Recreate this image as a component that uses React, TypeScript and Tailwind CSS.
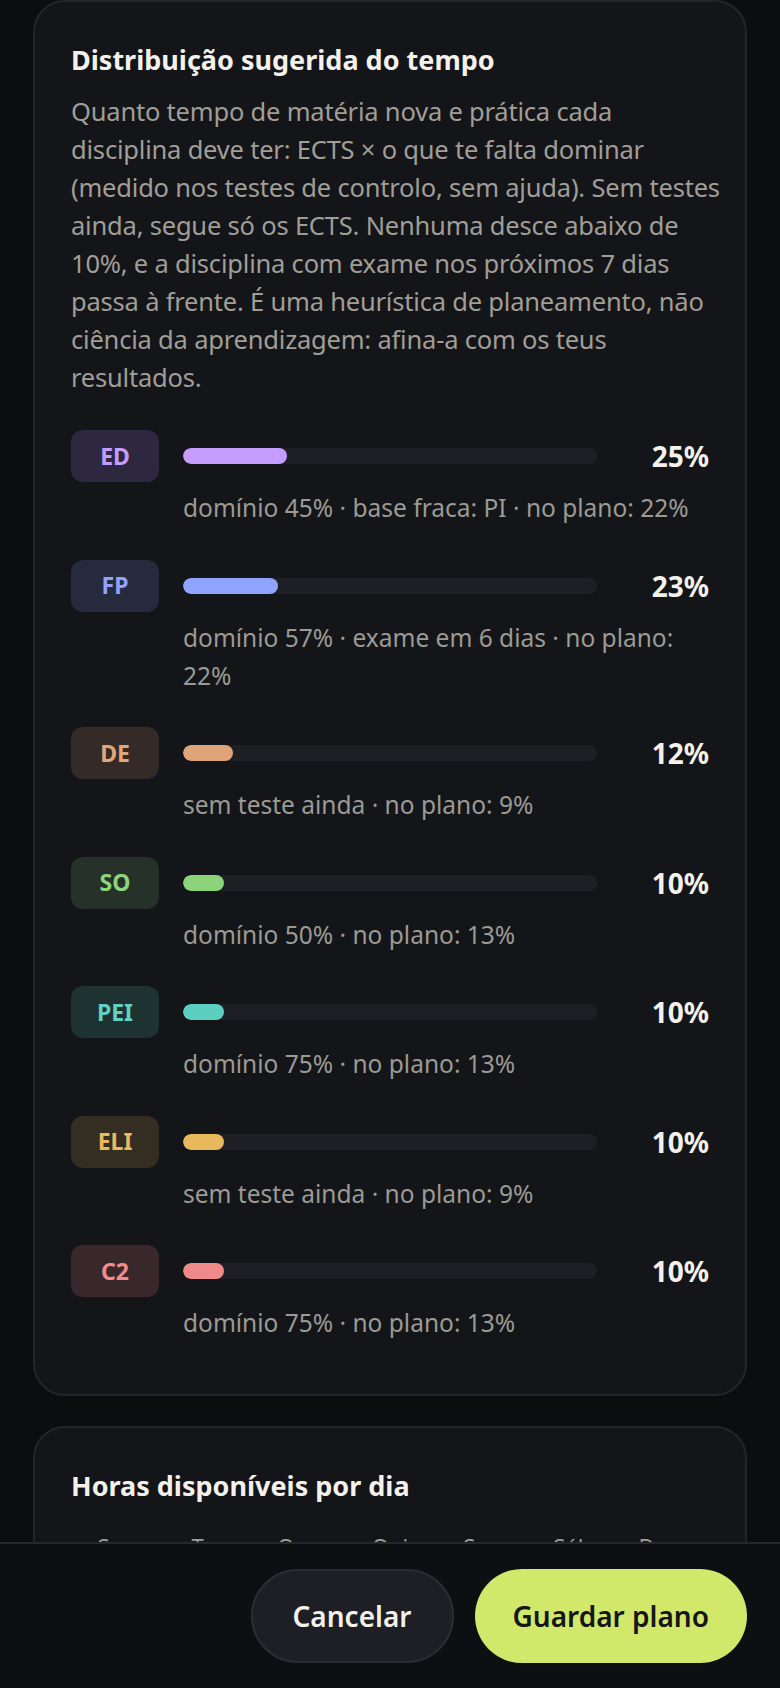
import React from 'react'

type Subject = {
  code: string
  pct: number
  note: string
  badge: string
  bar: string
}

const subjects: Subject[] = [
  { code: 'ED', pct: 25, note: 'domínio 45% · base fraca: PI · no plano: 22%', badge: 'bg-[#2d2840] text-[#c39dff]', bar: 'bg-[#c49dff]' },
  { code: 'FP', pct: 23, note: 'domínio 57% · exame em 6 dias · no plano: 22%', badge: 'bg-[#272a3d] text-[#8fa3ff]', bar: 'bg-[#8ea4ff]' },
  { code: 'DE', pct: 12, note: 'sem teste ainda · no plano: 9%', badge: 'bg-[#342a27] text-[#e3a67c]', bar: 'bg-[#e0a47a]' },
  { code: 'SO', pct: 10, note: 'domínio 50% · no plano: 13%', badge: 'bg-[#26312a] text-[#8fd47b]', bar: 'bg-[#8cd479]' },
  { code: 'PEI', pct: 10, note: 'domínio 75% · no plano: 13%', badge: 'bg-[#1f3232] text-[#60d1c2]', bar: 'bg-[#5dcfc0]' },
  { code: 'ELI', pct: 10, note: 'sem teste ainda · no plano: 9%', badge: 'bg-[#342d21] text-[#e9b95c]', bar: 'bg-[#e8b85c]' },
  { code: 'C2', pct: 10, note: 'domínio 75% · no plano: 13%', badge: 'bg-[#39282b] text-[#f28c8c]', bar: 'bg-[#f08a8a]' },
]

// keep the same line breaks as the design
const intro = [
  'Quanto tempo de matéria nova e prática cada',
  'disciplina deve ter: ECTS × o que te falta dominar',
  '(medido nos testes de controlo, sem ajuda). Sem testes',
  'ainda, segue só os ECTS. Nenhuma desce abaixo de',
  '10%, e a disciplina com exame nos próximos 7 dias',
  'passa à frente. É uma heurística de planeamento, não',
  'ciência da aprendizagem: afina-a com os teus',
  'resultados.',
]

const days = ['Seg', 'Ter', 'Qua', 'Qui', 'Sex', 'Sáb', 'Dom']

function SubjectRow({ s }: { s: Subject }) {
  return (
    <div className="flex gap-6">
      <div
        className={`flex h-[52px] w-[88px] shrink-0 items-center justify-center rounded-xl text-[23px] font-bold ${s.badge}`}
      >
        {s.code}
      </div>
      <div className="min-w-0 flex-1">
        <div className="flex h-[52px] items-center gap-6">
          <div className="h-4 flex-1 overflow-hidden rounded-full bg-[#1e1f24]">
            <div className={`h-full rounded-full ${s.bar}`} style={{ width: `${s.pct}%` }} />
          </div>
          <div className="w-[88px] text-right text-[28px] font-bold text-[#f3f1ea]">{s.pct}%</div>
        </div>
        <p className="mt-[7px] text-[24.5px] leading-[38px] text-[#9b9a93]">{s.note}</p>
      </div>
    </div>
  )
}

export default function App() {
  return (
    <div className="min-h-screen bg-[#0c0d0f] px-[33px] pb-[220px] font-['Noto_Sans',sans-serif]">
      <section className="rounded-[32px] border-2 border-[#24252a] bg-[#141519] px-9 pt-10 pb-[52px]">
        <h2 className="text-[27px] font-bold leading-9 text-[#f3f1ea]">Distribuição sugerida do tempo</h2>
        <p className="mt-[14px] text-[25.5px] leading-[38px] tracking-[-0.2px] text-[#a09e97]">
          {intro.map((line) => (
            <span key={line} className="block whitespace-nowrap">
              {line}
            </span>
          ))}
        </p>
        <div className="mt-[34px] flex flex-col gap-[32.5px]">
          {subjects.map((s) => (
            <SubjectRow key={s.code} s={s} />
          ))}
        </div>
      </section>

      <section className="mt-[30px] rounded-[32px] border-2 border-[#24252a] bg-[#141519] px-9 pt-10 pb-10">
        <h2 className="text-[27px] font-bold leading-9 text-[#f3f1ea]">Horas disponíveis por dia</h2>
        <div className="mt-[27px] grid grid-cols-7 text-center text-[22px] leading-[30px] text-[#a09e97]">
          {days.map((d) => (
            <span key={d}>{d}</span>
          ))}
        </div>
        <div className="mt-3 grid grid-cols-7 gap-2">
          {days.map((d) => (
            <div key={d} className="h-16 rounded-xl border-2 border-[#24252a] bg-[#1b1c21]" />
          ))}
        </div>
      </section>

      <div className="fixed inset-x-0 bottom-0 flex h-[146px] items-center justify-end gap-[21px] border-t-2 border-[#26272c] bg-[#0e0f12] pr-[33px]">
        <button className="h-[94px] rounded-full border-2 border-[#2c2d33] bg-[#1e1f24] px-10 text-[28px] font-semibold text-[#f3f1ea]">
          Cancelar
        </button>
        <button className="h-[94px] rounded-full bg-[#d1e86a] px-[38px] text-[28px] font-semibold text-[#15161a]">
          Guardar plano
        </button>
      </div>
    </div>
  )
}
